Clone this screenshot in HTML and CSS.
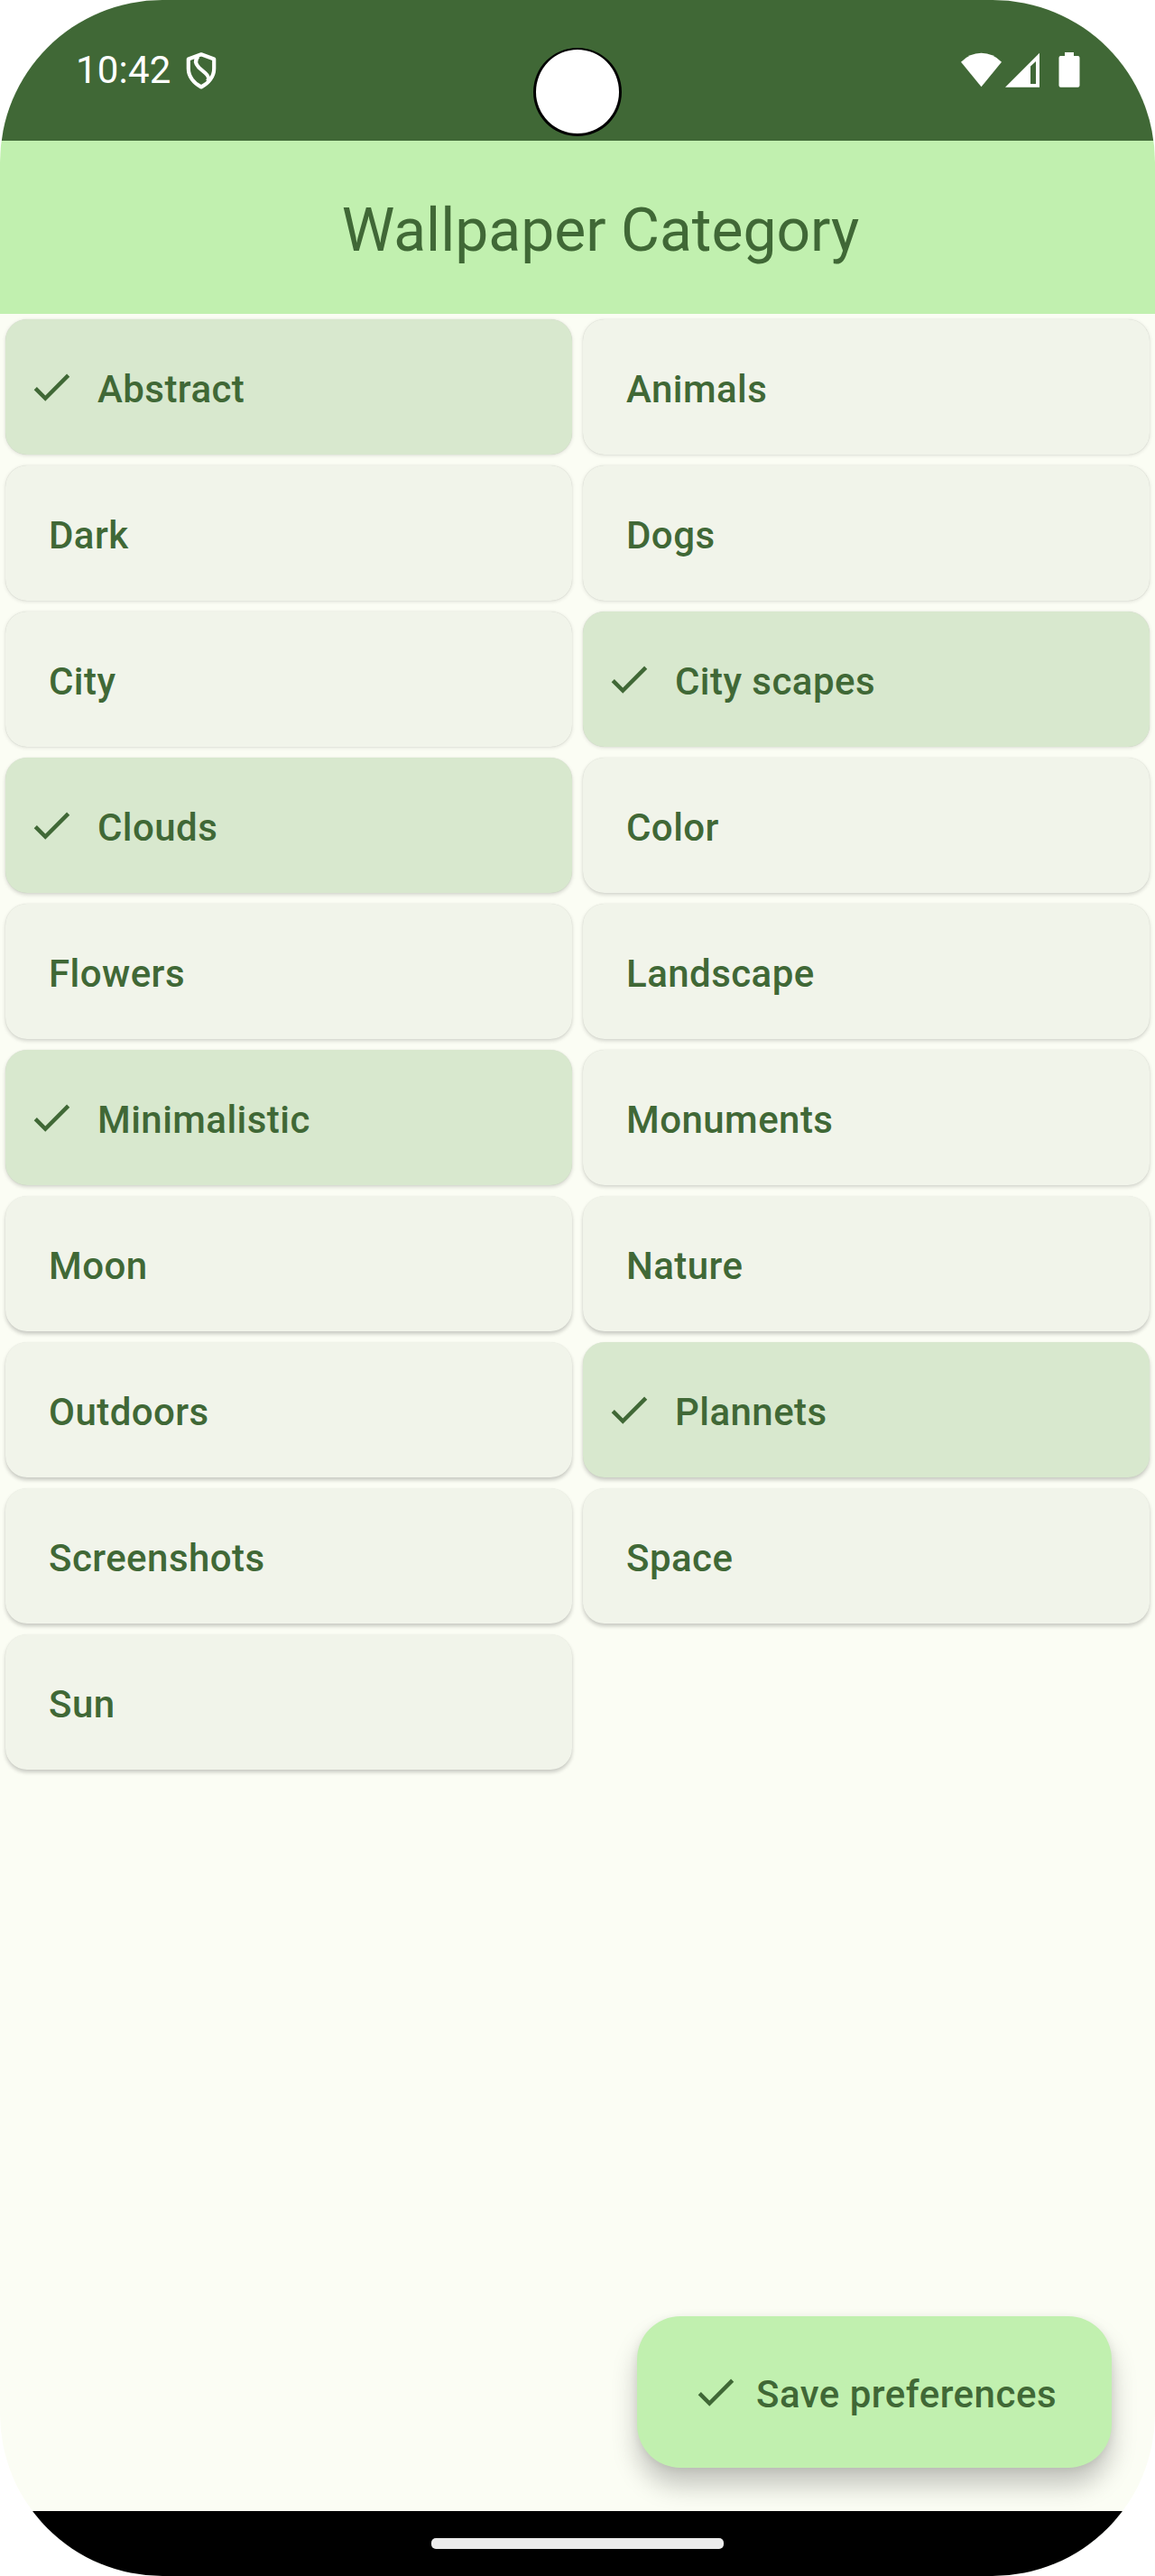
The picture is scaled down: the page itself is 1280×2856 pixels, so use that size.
FILE: index.html
```html
<!DOCTYPE html>
<html lang="en">
<head>
<meta charset="utf-8">
<title>Wallpaper Category</title>
<link rel="stylesheet" href="styles.css">
</head>
<body>
<svg class="defs" aria-hidden="true">
  <symbol id="check" viewBox="0 0 24 24"><path d="M9 16.17 4.83 12l-1.42 1.41L9 19 21 7l-1.41-1.41z"/></symbol>
</svg>
<div class="screen">
  <div class="status">
    <span class="time">10:42</span>
    <svg class="shield" viewBox="0 0 36 42"><path d="M18 2.300 L32.200 7.500 V18 C32.200 27 26 34.500 18 38.500 C10 34.500 3.800 27 3.800 18 V7.500 Z"/><path d="M14.500 4.500 C10.500 9 12 13.500 15.500 17 L22.500 23 C26.500 26.500 27 29 25 32"/></svg>
    <svg class="signals" viewBox="0 0 132 40">
      <path d="M0 10.800 Q9.500 .7 22.500 .7 T45 10.800 L22.500 38.300Z"/>
      <path fill-rule="evenodd" d="M49 38.800 L87 .8 V38.800Z M77 15.500 V35 H83 V10Z"/>
      <path d="M115 0h10v4h4.500q2 0 2 2v30.800q0 2-2 2h-19q-2 0-2-2V6q0-2 2-2h4.500z"/>
    </svg>
    <div class="camera"></div>
  </div>
  <header class="bar"><h1>Wallpaper Category</h1></header>
  <main class="content">
    <div class="grid">
      <div class="card on"><svg class="check"><use href="#check"/></svg><span class="label">Abstract</span></div>
      <div class="card"><span class="label">Animals</span></div>
      <div class="card"><span class="label">Dark</span></div>
      <div class="card"><span class="label">Dogs</span></div>
      <div class="card"><span class="label">City</span></div>
      <div class="card on"><svg class="check"><use href="#check"/></svg><span class="label">City scapes</span></div>
      <div class="card on"><svg class="check"><use href="#check"/></svg><span class="label">Clouds</span></div>
      <div class="card"><span class="label">Color</span></div>
      <div class="card"><span class="label">Flowers</span></div>
      <div class="card"><span class="label">Landscape</span></div>
      <div class="card on"><svg class="check"><use href="#check"/></svg><span class="label">Minimalistic</span></div>
      <div class="card"><span class="label">Monuments</span></div>
      <div class="card"><span class="label">Moon</span></div>
      <div class="card"><span class="label">Nature</span></div>
      <div class="card"><span class="label">Outdoors</span></div>
      <div class="card on"><svg class="check"><use href="#check"/></svg><span class="label">Plannets</span></div>
      <div class="card"><span class="label">Screenshots</span></div>
      <div class="card"><span class="label">Space</span></div>
      <div class="card"><span class="label">Sun</span></div>
    </div>
    <button class="save"><svg class="check"><use href="#check"/></svg><span class="label">Save preferences</span></button>
  </main>
  <div class="nav"><div class="pill"></div></div>
</div>
</body>
</html>
```

FILE: styles.css
```css
* { box-sizing: border-box; }
body { margin: 0; background: #fff; font-family: Roboto, sans-serif; color: #406836; }
.defs { position: absolute; width: 0; height: 0; }
.screen {
  width: 1280px; height: 2856px;
  display: flex; flex-direction: column;
  background: #fbfdf4;
  border-radius: 180px;
  overflow: hidden;
}
.status {
  position: relative;
  flex: none; height: 156px;
  display: flex; align-items: flex-start;
  padding: 58px 83px 0 84px;
  background: #406836; color: #fff;
}
.time { font-size: 42px; line-height: 40px; letter-spacing: .2px; }
.shield { width: 36px; height: 42px; margin-left: 15px; fill: none; stroke: #fff; stroke-width: 4.2; stroke-linejoin: round; }
.signals { width: 132px; height: 40px; margin-left: auto; fill: #fff; }
.camera {
  position: absolute; left: 591px; top: 53px;
  width: 98px; height: 98px;
  border: solid #000; border-width: 2px 3px 3px;
  border-radius: 50%;
  background: #fff;
}
.bar {
  flex: none; height: 192px;
  display: flex; align-items: center; justify-content: center;
  padding: 8px 0 0 51px;
  background: #c1f0af;
}
h1 { margin: 0; font-size: 66px; font-weight: 400; line-height: 84px; }
.content { flex: 1; display: flex; flex-direction: column; justify-content: space-between; padding: 6px; }
.grid { display: grid; grid-template-columns: 1fr 1fr; grid-auto-rows: 150px; gap: 12px; }
.card {
  display: flex; align-items: center;
  padding: 0 48px;
  border-radius: 24px;
  background: #f1f4ea;
  font-size: 42px; font-weight: 500; letter-spacing: .45px;
  box-shadow: 0 1px 4px rgba(0,0,0,.12), 0 0 1px rgba(0,0,0,.16);
}
.card:nth-child(n+7) { box-shadow: 0 2px 4px rgba(0,0,0,.16), 0 0 1px rgba(0,0,0,.12); }
.card:nth-child(n+13) { box-shadow: 0 3px 4px rgba(0,0,0,.2), 0 0 1px rgba(0,0,0,.08); }
.on { padding-left: 24px; background: #d8e8ce; }
.label { padding-top: 4px; }
.check { flex: none; width: 54px; height: 54px; margin-right: 24px; fill: currentColor; }
.save {
  align-self: flex-end;
  display: flex; align-items: center;
  width: 526px; height: 168px;
  margin: 0 42px 42px;
  padding: 0 0 0 60px;
  border: 0; border-radius: 48px;
  background: #c1f0af; color: inherit;
  font: 500 42px Roboto, sans-serif; letter-spacing: .5px;
  box-shadow: 0 20px 28px rgba(0,0,0,.22), 0 2px 10px rgba(0,0,0,.08);
}
.save .check { margin-right: 18px; }
.nav { flex: none; height: 72px; display: flex; align-items: center; justify-content: center; background: #000; }
.pill { width: 324px; height: 12px; border-radius: 5px; background: #ebebeb; }
```
